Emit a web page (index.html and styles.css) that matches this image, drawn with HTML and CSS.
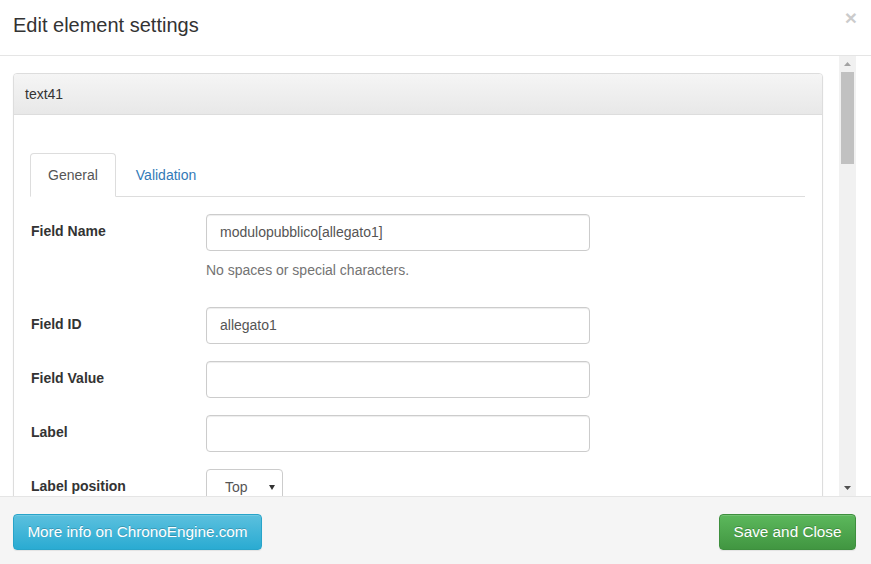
FILE: index.html
```html
<!DOCTYPE html>
<html>
<head>
<meta charset="utf-8">
<title>Edit element settings</title>
<link rel="stylesheet" href="styles.css">
</head>
<body>
<div class="modal">
  <div class="modal-header">
    <h4 class="modal-title">Edit element settings</h4>
    <span class="close">×</span>
  </div>
  <div class="modal-body">
    <div class="scroll-content">
      <div class="panel">
        <div class="panel-heading">text41</div>
        <div class="panel-body">
          <ul class="nav-tabs">
            <li class="tab active">General</li>
            <li class="tab">Validation</li>
          </ul>
          <div class="tab-content">
            <div class="form-group">
              <div class="control-label">Field Name</div>
              <div class="control">
                <div class="input">modulopubblico[allegato1]</div>
                <div class="help-block">No spaces or special characters.</div>
              </div>
            </div>
            <div class="form-group">
              <div class="control-label">Field ID</div>
              <div class="control"><div class="input">allegato1</div></div>
            </div>
            <div class="form-group">
              <div class="control-label">Field Value</div>
              <div class="control"><div class="input"></div></div>
            </div>
            <div class="form-group">
              <div class="control-label">Label</div>
              <div class="control"><div class="input"></div></div>
            </div>
            <div class="form-group">
              <div class="control-label">Label position</div>
              <div class="control">
                <div class="select"><span>Top</span><span class="caret"></span></div>
              </div>
            </div>
          </div>
        </div>
      </div>
    </div>
    <div class="scrollbar">
      <div class="sb-btn"><svg width="7" height="4" viewBox="0 0 7 4"><polygon points="0,4 7,4 3.5,0" fill="#a3a3a3"/></svg></div>
      <div class="sb-thumb"></div>
      <div class="sb-space"></div>
      <div class="sb-btn"><svg width="7" height="4" viewBox="0 0 7 4"><polygon points="0,0 7,0 3.5,4" fill="#505050"/></svg></div>
    </div>
    <div class="body-gap"></div>
  </div>
  <div class="modal-footer">
    <div class="btn btn-info">More info on ChronoEngine.com</div>
    <div class="btn btn-success">Save and Close</div>
  </div>
</div>
</body>
</html>
```
FILE: styles.css
```css
html, body {
  margin: 0;
  padding: 0;
  background: #fff;
}
body {
  font-family: "Liberation Sans", Arial, Helvetica, sans-serif;
  font-size: 14px;
  line-height: 20px;
  color: #333;
}
.modal {
  width: 871px;
  height: 564px;
  display: flex;
  flex-direction: column;
  overflow: hidden;
}
.modal-header {
  height: 55px;
  border-bottom: 1px solid #e5e5e5;
  display: flex;
  justify-content: space-between;
  align-items: flex-start;
  padding: 0 14px 0 13px;
  flex: none;
}
.modal-title {
  margin: 14px 0 0 0;
  font-size: 20px;
  line-height: 22px;
  font-weight: normal;
  color: #333;
}
.close {
  margin-top: 7px;
  font-size: 21px;
  line-height: 21px;
  font-weight: bold;
  color: #000;
  opacity: 0.2;
}
.modal-body {
  height: 440px;
  display: flex;
  flex: none;
}
.scroll-content {
  flex: 1;
  overflow: hidden;
  padding: 17px 16px 0 13px;
}
.panel {
  border: 1px solid #ddd;
  border-radius: 4px;
  background: #fff;
  box-shadow: 0 1px 2px rgba(0,0,0,0.05);
  min-height: 600px;
}
.panel-heading {
  padding: 10px 11px;
  line-height: 20px;
  background: linear-gradient(#f5f5f5, #e8e8e8);
  border-bottom: 1px solid #ddd;
  border-radius: 3px 3px 0 0;
  color: #333;
}
.panel-body {
  padding: 38px 17px 0 16px;
}
.nav-tabs {
  list-style: none;
  margin: 0;
  padding: 0;
  display: flex;
  border-bottom: 1px solid #ddd;
}
.tab {
  padding: 11px 17px 11px 17px;
  line-height: 20px;
  border: 1px solid transparent;
  border-radius: 4px 4px 0 0;
  margin-right: 2px;
  margin-bottom: -1px;
  color: #337ab7;
}
.tab.active {
  color: #555;
  background: #fff;
  border-color: #ddd #ddd transparent;
}
.tab-content {
  padding-top: 17px;
}
.form-group {
  display: grid;
  grid-template-columns: 176px 384px;
  margin-bottom: 17px;
}
.control-label {
  padding: 7px 0 0 1px;
  font-weight: bold;
  line-height: 20px;
}
.input {
  height: 37px;
  box-sizing: border-box;
  border: 1px solid #ccc;
  border-radius: 4px;
  box-shadow: inset 0 1px 1px rgba(0,0,0,0.075);
  padding: 0 13px;
  line-height: 35px;
  color: #555;
  background: #fff;
}
.help-block {
  margin: 9px 0 10px;
  color: #737373;
}
.select {
  width: 77px;
  height: 37px;
  box-sizing: border-box;
  border: 1px solid #ccc;
  border-radius: 4px;
  padding: 0 7px 0 18px;
  line-height: 35px;
  color: #555;
  display: flex;
  justify-content: space-between;
  align-items: center;
  background: #fff;
}
.caret {
  width: 0;
  height: 0;
  border-left: 3px solid transparent;
  border-right: 3px solid transparent;
  border-top: 5px solid #333;
}
.scrollbar {
  width: 17px;
  background: #f1f1f1;
  display: flex;
  flex-direction: column;
  flex: none;
}
.sb-btn {
  height: 16px;
  display: flex;
  align-items: center;
  justify-content: center;
}
.sb-btn svg {
  display: block;
}
.sb-thumb {
  height: 92px;
  margin: 0 2px;
  background: #c1c1c1;
}
.sb-space {
  flex: 1;
}
.body-gap {
  width: 15px;
  flex: none;
}
.modal-footer {
  flex: 1;
  border-top: 1px solid #e5e5e5;
  background: #f5f5f5;
  padding: 17px 15px 0 13px;
  display: flex;
  justify-content: space-between;
  align-items: flex-start;
}
.btn {
  height: 36px;
  box-sizing: border-box;
  border: 1px solid transparent;
  border-radius: 4px;
  color: #fff;
  text-align: center;
  line-height: 34px;
  font-size: 15.3px;
  text-shadow: 0 -1px 0 rgba(0,0,0,0.2);
  box-shadow: inset 0 1px 0 rgba(255,255,255,0.15), 0 1px 1px rgba(0,0,0,0.075);
}
.btn-info {
  width: 249px;
  background: linear-gradient(#5bc0de, #2aabd2);
  border-color: #28a4c9;
}
.btn-success {
  width: 137px;
  background: linear-gradient(#5cb85c, #419641);
  border-color: #3e8f3e;
}
```
